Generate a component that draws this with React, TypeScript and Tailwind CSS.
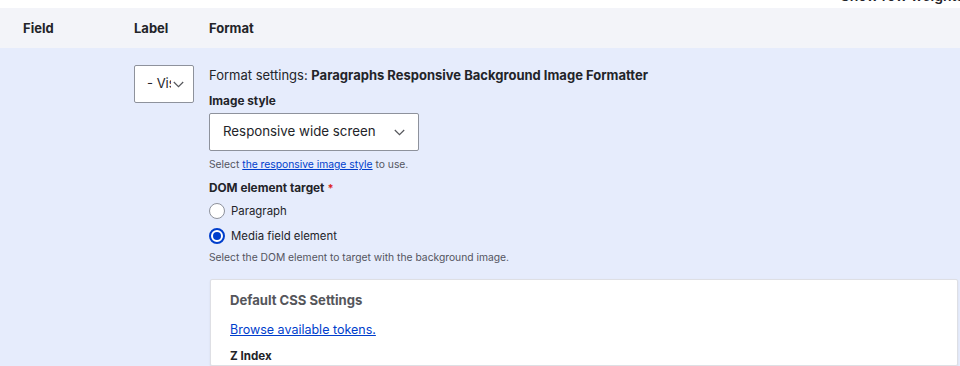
import React from "react";

const Chevron = ({ className = "" }: { className?: string }) => (
  <svg className={className} width="11" height="7" viewBox="0 0 11 7" fill="none">
    <path d="M0.8 1l4.7 4.7L10.2 1" stroke="#55565b" strokeWidth="1.2" />
  </svg>
);

export default function App() {
  return (
    <div className="w-[960px] h-[366px] overflow-hidden bg-white text-[#232429]" style={{ fontFamily: "Inter, 'Noto Sans', sans-serif" }}>
      <div className="h-[8px] overflow-hidden flex justify-end items-start">
        <div className="flex items-center gap-[6px] -mt-[13px] text-[14px] leading-[18px] font-semibold text-[#232429] whitespace-nowrap mr-[-4px]">
          <span className="inline-block w-[8px] h-[8px] rounded-full bg-[#232429]" />
          <span>Show row weights</span>
        </div>
      </div>
      <div className="flex h-[40px] items-center bg-[#f3f4f9] text-[13px] font-bold pt-[1px]">
        <div className="w-[134px] pl-[23px]">Field</div>
        <div className="w-[75px]">Label</div>
        <div className="flex-1">Format</div>
      </div>
      <div className="flex bg-[#e6ecfc] pt-[17px] h-[318px]">
        <div className="w-[134px]" />
        <div className="w-[75px]">
          <div className="w-[60px] h-[38px] bg-white border border-[#8e929c] rounded-[2px] flex items-center pl-[12px] pr-[8px] text-[13px] text-[#232429] overflow-hidden">
            <span className="w-[24px] overflow-hidden whitespace-nowrap">- Visible</span>
            <Chevron className="ml-[2px]" />
          </div>
        </div>
        <div className="flex-1 flex flex-col">
          <div className="text-[13px] leading-[20px]">
            Format settings: <span className="font-bold">Paragraphs Responsive Background Image Formatter</span>
          </div>
          <div className="mt-[7px] text-[11.8px] leading-[18px] font-bold">Image style</div>
          <div className="mt-[3px] w-[210px] h-[38px] bg-white border border-[#8e929c] rounded-[2px] flex items-center justify-between pl-[13px] pr-[13px] text-[13.3px] text-[#232429] whitespace-nowrap">
            <span>Responsive wide screen</span>
            <Chevron />
          </div>
          <div className="mt-[5px] text-[10.3px] leading-[16px] text-[#545560]">
            Select <a className="text-[#003ecc] underline" href="#">the responsive image style</a> to use.
          </div>
          <div className="mt-[7px] text-[11.8px] leading-[18px] font-bold flex items-center">
            DOM element target<span className="text-[#dc2323] ml-[3px] text-[11px]">*</span>
          </div>
          <div className="mt-[4px] flex items-center gap-[6px] text-[11.4px] leading-[20px]">
            <span className="w-[16px] h-[16px] rounded-full border border-[#8e929c] bg-white" />
            <span>Paragraph</span>
          </div>
          <div className="mt-[5px] flex items-center gap-[6px] text-[11.4px] leading-[20px]">
            <span className="w-[16px] h-[16px] rounded-full border-[2px] border-[#003ecc] bg-white flex items-center justify-center">
              <span className="w-[8px] h-[8px] rounded-full bg-[#003ecc]" />
            </span>
            <span>Media field element</span>
          </div>
          <div className="mt-[3px] text-[10.3px] leading-[16px] text-[#545560]">
            Select the DOM element to target with the background image.
          </div>
          <div className="mt-[14px] ml-[1px] mr-[2px] flex-1 bg-white border border-[#dedfe4] rounded-[2px] shadow-[0_1px_2px_rgba(0,0,0,0.08)] pl-[19px] pt-[10px]">
            <div className="text-[13.1px] leading-[20px] font-bold text-[#55565b]">Default CSS Settings</div>
            <div className="mt-[10px] text-[12.5px] leading-[20px]">
              <a className="text-[#003ecc] underline" href="#">Browse available tokens.</a>
            </div>
            <div className="mt-[7px] text-[11.6px] leading-[18px] font-bold">Z Index</div>
          </div>
        </div>
      </div>
    </div>
  );
}
